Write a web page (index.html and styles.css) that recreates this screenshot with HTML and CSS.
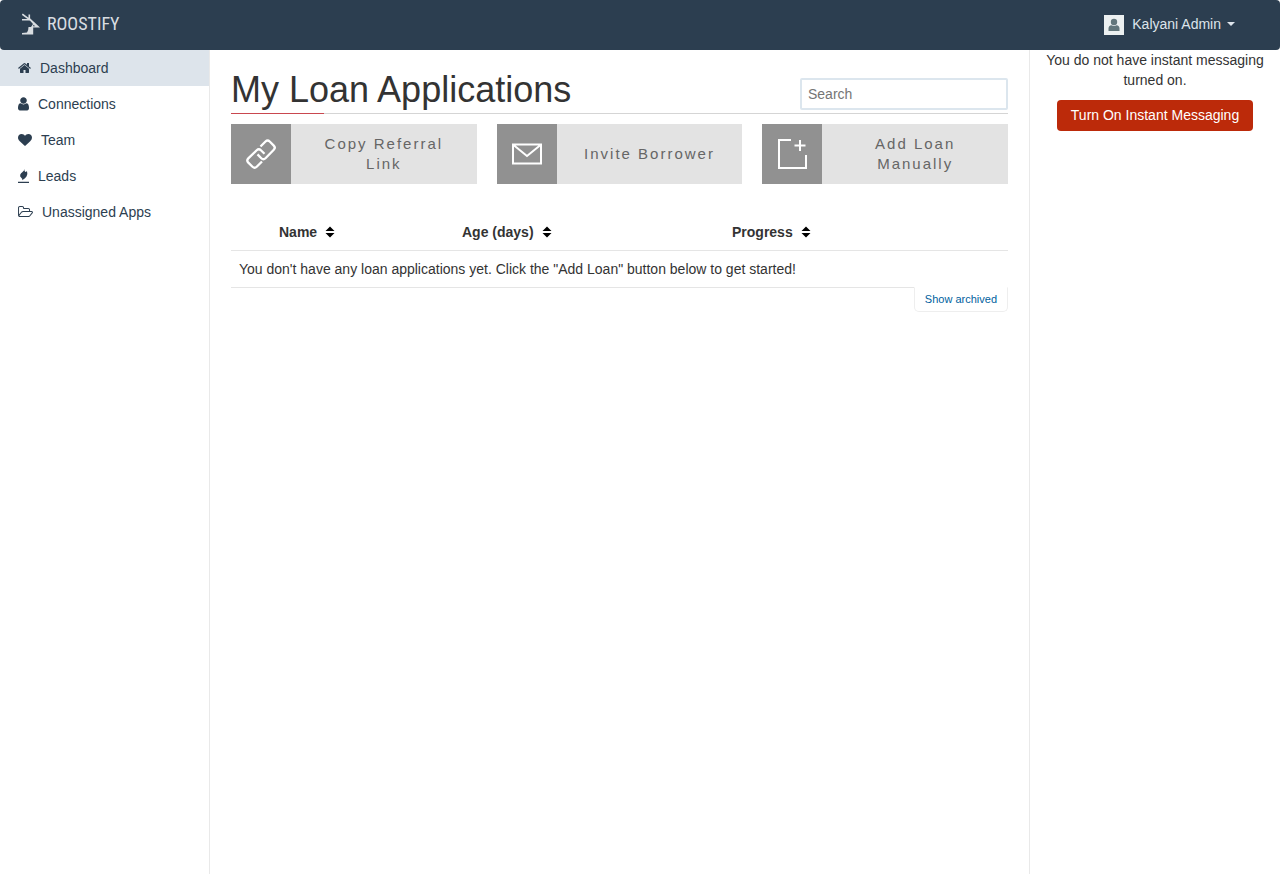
FILE: index.html
```html
<!DOCTYPE html>
<html lang="en">
<head>
<meta charset="utf-8">
<title>Roostify - My Loan Applications</title>
<link rel="stylesheet" href="styles.css">
</head>
<body>
<header class="navbar">
  <a class="brand" href="#">
    <svg class="brand-mark" width="18" height="22" viewBox="0 0 18 22" aria-hidden="true">
      <path d="M0.300 1.200L7 6.200M7.300 1.500V6.500M0 6.700H8" fill="none" stroke="currentColor" stroke-width="1.600"/>
      <path d="M6.500 6L8.300 5.500L18 14.600H11.200V21.500H0V20L5 19.500Q6.500 17.500 6.500 14H9L11 11Z" fill="currentColor"/>
      <path d="M11.500 11.800L13.200 13.300H11Z" fill="#2c3e50"/>
    </svg>
    <span>ROOSTIFY</span>
  </a>
  <button class="account" type="button">
    <svg width="20" height="20" viewBox="0 0 20 20" aria-hidden="true">
      <rect width="20" height="20" fill="#ecf0f1"/>
      <circle cx="10" cy="7" r="3.200" fill="#62767b"/>
      <path d="M4.500 16v-2.500q0-3 3-3.200q2.500 1.400 5 0q3 .2 3 3.200V16z" fill="#62767b"/>
    </svg>
    <span class="account-name">Kalyani Admin</span>
    <span class="caret"></span>
  </button>
</header>
<div class="layout">
  <nav class="sidebar">
    <a class="nav-item active" href="#">
      <svg width="13" height="14" viewBox="64 0 1664 1792" aria-hidden="true"><path d="M1472 992v480q0 26-19 45t-45 19h-384v-384h-256v384h-384q-26 0-45-19t-19-45v-480q0-1 .5-3t.5-3l575-474 575 474q1 2 1 6zm223-69l-62 74q-8 9-21 11h-3q-13 0-21-7l-692-577-692 577q-12 8-24 7-13-2-21-11l-62-74q-8-10-7-23.500t11-21.500l719-599q32-26 76-26t76 26l244 204v-195q0-14 9-23t23-9h192q14 0 23 9t9 23v408l219 182q10 8 11 21.500t-7 23.500z"/></svg>
      <span>Dashboard</span>
    </a>
    <a class="nav-item" href="#">
      <svg width="11" height="14" viewBox="256 100 1280 1630" aria-hidden="true"><path d="M1536 1399q0 109-62.500 187t-150.500 78h-854q-88 0-150.500-78t-62.500-187q0-85 8.500-160.500t31.500-152 58.500-131 94-89 134.500-34.500q131 128 313 128t313-128q76 0 134.500 34.500t94 89 58.500 131 31.500 152 8.500 160.500zm-256-887q0 159-112.500 271.500t-271.500 112.500-271.500-112.500-112.500-271.500 112.500-271.500 271.500-112.500 271.500 112.500 112.500 271.500z"/></svg>
      <span>Connections</span>
    </a>
    <a class="nav-item" href="#">
      <svg width="14" height="14" viewBox="0 0 1792 1792" aria-hidden="true"><path d="M896 1664q-26 0-44-18l-624-602q-10-8-27.500-26t-55.500-65.500-68-97.500-53.500-121-23.500-138q0-220 127-344t351-124q62 0 126.500 21.500t120 58 95.500 68.500 76 68q36-36 76-68t95.500-68.500 120-58 126.500-21.500q224 0 351 124t127 344q0 221-229 450l-623 600q-18 18-44 18z"/></svg>
      <span>Team</span>
    </a>
    <a class="nav-item" href="#">
      <svg width="11" height="14" viewBox="0 0 11 14" aria-hidden="true"><path d="M0 12.800h11v1.200H0zM6.500 0Q6 1.800 7.300 3L9 2.200Q10 5.500 8.500 7.500Q7 9.500 4.200 11.200Q4.800 9.800 3.500 9Q1.600 7.800 2.200 5.800Q2.800 4.300 4.500 3Q6 1.800 6.500 0Z"/></svg>
      <span>Leads</span>
    </a>
    <a class="nav-item" href="#">
      <svg width="15" height="14" viewBox="64 0 1909 1792" aria-hidden="true"><path d="M1845 931q0-35-53-35h-1088q-40 0-85.500 21.500t-71.500 52.500l-294 363q-18 24-18 40 0 35 53 35h1088q40 0 86-22t71-53l294-363q18-22 18-39zm-1141-163h768v-160q0-40-28-68t-68-28h-576q-40 0-68-28t-28-68v-64q0-40-28-68t-68-28h-320q-40 0-68 28t-28 68v853l256-315q44-53 116-87.500t140-34.500zm1269 163q0 62-46 120l-295 363q-43 53-116 87.500t-140 34.500h-1088q-92 0-158-66t-66-158v-960q0-92 66-158t158-66h320q92 0 158 66t66 158v32h544q92 0 158 66t66 158v160h192q54 0 99 24.500t67 70.500q15 32 15 68z"/></svg>
      <span>Unassigned Apps</span>
    </a>
  </nav>
  <main class="content">
    <div class="page-head">
      <h1>My Loan Applications</h1>
      <input class="search" type="search" placeholder="Search" aria-label="Search">
    </div>
    <div class="actions">
      <button class="action" type="button">
        <span class="action-icon">
          <svg width="60" height="60" viewBox="0 0 60 60" fill="none" stroke="#fff" stroke-width="2.300" aria-hidden="true">
            <path d="M29.500 22.500L34.500 17.500a3 3 0 0 1 4.200 0L42.800 21.600a3 3 0 0 1 0 4.200L34.500 34.200a3 3 0 0 1-4.200 0L26.500 30.400"/>
            <path d="M31 37.500L25.700 42.800a3 3 0 0 1-4.200 0L17.300 38.600a3 3 0 0 1 0-4.200L25.700 26.200a3 3 0 0 1 4.200 0L33.500 29.800"/>
          </svg>
        </span>
        <span class="action-label">Copy Referral Link</span>
      </button>
      <button class="action" type="button">
        <span class="action-icon">
          <svg width="60" height="60" viewBox="0 0 60 60" fill="none" stroke="#fff" stroke-width="2" aria-hidden="true">
            <path d="M16 20.500H44V39.500H16ZM16.500 21L30 32L43.500 21"/>
          </svg>
        </span>
        <span class="action-label">Invite Borrower</span>
      </button>
      <button class="action" type="button">
        <span class="action-icon">
          <svg width="60" height="60" viewBox="0 0 60 60" fill="none" stroke="#fff" stroke-width="2" aria-hidden="true">
            <path d="M29 16H17V44H44V31M38 16V27M32.500 21.500H43.500"/>
          </svg>
        </span>
        <span class="action-label">Add Loan Manually</span>
      </button>
    </div>
    <table class="loans">
      <colgroup><col class="col-mark"><col class="col-name"><col class="col-age"><col></colgroup>
      <thead>
        <tr>
          <td></td>
          <th scope="col"><button class="sort" type="button">Name <svg width="8" height="12" viewBox="0 0 8 12" aria-hidden="true"><path d="M4 .5L8.500 5H-.5ZM-.5 7H8.500L4 11.500Z"/></svg></button></th>
          <th scope="col"><button class="sort" type="button">Age (days) <svg width="8" height="12" viewBox="0 0 8 12" aria-hidden="true"><path d="M4 .5L8.500 5H-.5ZM-.5 7H8.500L4 11.500Z"/></svg></button></th>
          <th scope="col"><button class="sort" type="button">Progress <svg width="8" height="12" viewBox="0 0 8 12" aria-hidden="true"><path d="M4 .5L8.500 5H-.5ZM-.5 7H8.500L4 11.500Z"/></svg></button></th>
        </tr>
      </thead>
      <tbody>
        <tr><td colspan="4">You don't have any loan applications yet. Click the "Add Loan" button below to get started!</td></tr>
      </tbody>
    </table>
    <a class="archived" href="#">Show archived</a>
  </main>
  <aside class="messaging">
    <p>You do not have instant messaging turned on.</p>
    <button class="turn-on" type="button">Turn On Instant Messaging</button>
  </aside>
</div>
</body>
</html>
```
FILE: styles.css
```css
* { box-sizing: border-box; }
body {
  margin: 0;
  min-height: 100vh;
  display: flex;
  flex-direction: column;
  font: 14px/20px "Liberation Sans", Arial, sans-serif;
  color: #333;
  background: #fff;
}
button { font: inherit; color: inherit; border: 0; margin: 0; cursor: pointer; }
a { text-decoration: none; }

.navbar {
  display: flex;
  align-items: center;
  justify-content: space-between;
  height: 50px;
  padding: 0 45px 0 22px;
  background: #2c3e50;
  border-radius: 4px;
}
.brand {
  display: flex;
  align-items: center;
  gap: 7px;
  padding-bottom: 3px;
  color: #d9dde1;
  font: 18px/22px "Roboto Condensed", "Liberation Sans Narrow", sans-serif;
}
.account {
  display: flex;
  align-items: center;
  gap: 8px;
  padding: 0;
  background: none;
  color: #dde4eb;
}
.account-name { padding-bottom: 2px; }
.caret {
  margin: -2px 0 0 -2px;
  border: 4px solid transparent;
  border-top-color: currentColor;
  border-bottom: 0;
}

.layout { flex: 1; display: flex; }
.sidebar { flex: 0 0 210px; border-right: 1px solid #e9e9e9; }
.nav-item {
  display: flex;
  align-items: center;
  gap: 9px;
  height: 36px;
  padding: 0 18px;
  color: #2c3e50;
}
.nav-item svg { fill: currentColor; }
.nav-item.active { background: #dde4eb; }

.content {
  flex: 1;
  min-width: 0;
  display: flex;
  flex-direction: column;
  padding: 20px 21px;
}
.page-head {
  display: flex;
  align-items: flex-start;
  justify-content: space-between;
  height: 44px;
  margin-bottom: 10px;
  background:
    linear-gradient(#c9474f, #c9474f) left bottom / 12% 1px no-repeat,
    linear-gradient(#d5d5d5, #d5d5d5) left bottom / 100% 1px no-repeat;
}
h1 { margin: 0; font-size: 36px; line-height: 40px; font-weight: 400; }
.search {
  width: 208px;
  height: 32px;
  margin: 8px 0 0;
  padding: 0 6px;
  border: 2px solid #dce6ee;
  border-radius: 2px;
  background: #fff;
  font: inherit;
  color: #333;
  appearance: none;
}
.search::placeholder { color: #757575; }

.actions { display: grid; grid-template-columns: repeat(3, 1fr); gap: 20px; }
.action {
  display: flex;
  align-items: stretch;
  min-height: 60px;
  padding: 0;
  background: #e3e3e3;
  color: #666;
  font-size: 15px;
  letter-spacing: 2px;
}
.action-icon { flex: 0 0 60px; display: flex; background: #919191; }
.action-label { flex: 1; align-self: center; padding: 0 20px; text-align: center; }

.loans {
  width: 100%;
  margin-top: 30px;
  table-layout: fixed;
  border-collapse: collapse;
}
.loans th, .loans td { padding: 8px; text-align: left; }
.loans tbody td { border-top: 1px solid #e5e5e5; border-bottom: 1px solid #e5e5e5; }
.col-mark { width: 40px; }
.col-name { width: 183px; }
.col-age { width: 270px; }
.sort {
  display: flex;
  align-items: center;
  gap: 9px;
  padding: 0;
  background: none;
  font-weight: 700;
}
.sort svg { fill: #000; overflow: visible; }
.archived {
  align-self: flex-end;
  margin-top: -1px;
  padding: 1px 10px 2px;
  border: 1px solid #eee;
  border-top-color: #fff;
  border-radius: 0 0 5px 5px;
  background: #fff;
  color: #005f9e;
  font-size: 11px;
}

.messaging {
  flex: 0 0 251px;
  padding: 0 15px;
  border-left: 1px solid #e9e9e9;
  text-align: center;
}
.messaging p { margin: 0 0 10px; }
.turn-on {
  min-height: 31px;
  padding: 5px 14px 6px;
  border-radius: 4px;
  background: #bc2a0a;
  color: #fff;
}
```
